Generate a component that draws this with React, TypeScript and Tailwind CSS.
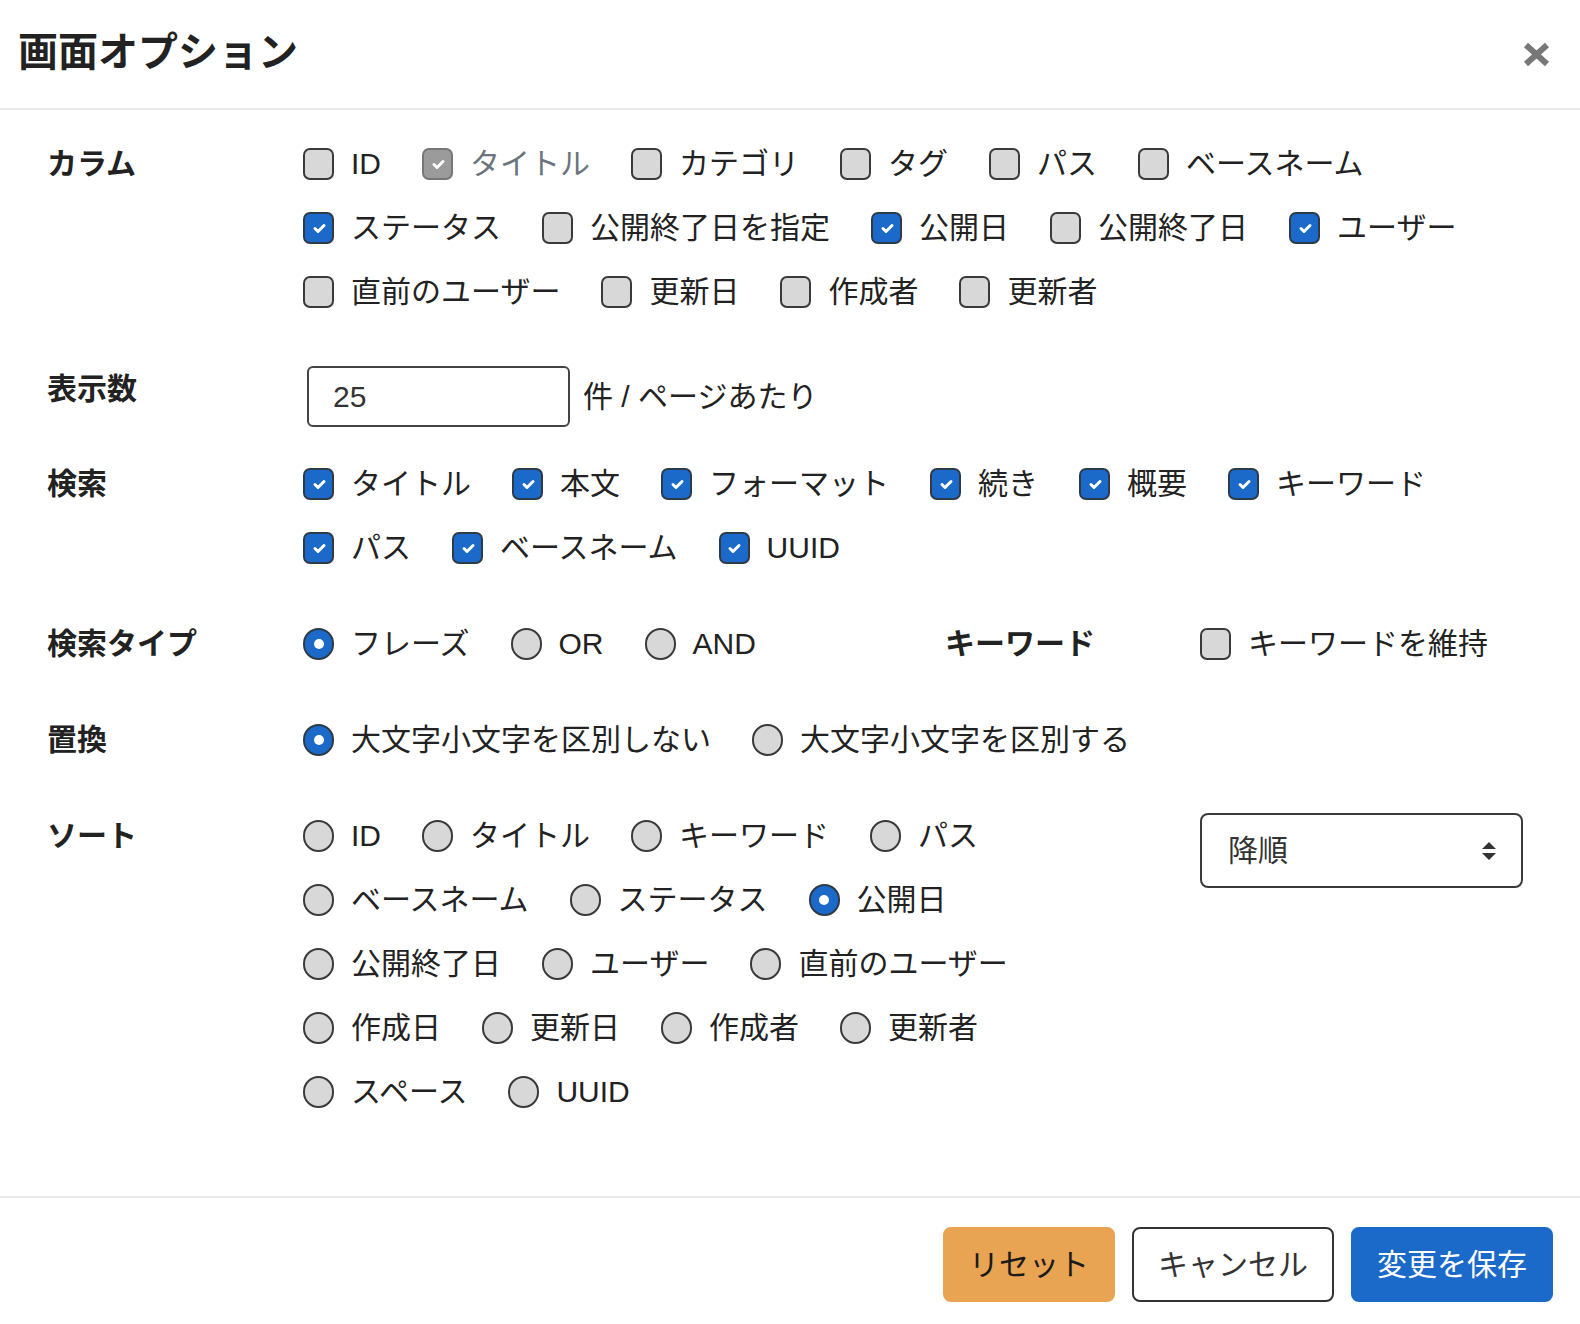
import type { ReactNode } from 'react';

type Opt = { label: string; checked?: boolean; disabled?: boolean };

const columns: Opt[] = [
  { label: 'ID' },
  { label: 'タイトル', checked: true, disabled: true },
  { label: 'カテゴリ' },
  { label: 'タグ' },
  { label: 'パス' },
  { label: 'ベースネーム' },
  { label: 'ステータス', checked: true },
  { label: '公開終了日を指定' },
  { label: '公開日', checked: true },
  { label: '公開終了日' },
  { label: 'ユーザー', checked: true },
  { label: '直前のユーザー' },
  { label: '更新日' },
  { label: '作成者' },
  { label: '更新者' },
];

const searchFields = ['タイトル', '本文', 'フォーマット', '続き', '概要', 'キーワード', 'パス', 'ベースネーム', 'UUID'];

const sortFields = [
  'ID', 'タイトル', 'キーワード', 'パス', 'ベースネーム', 'ステータス', '公開日',
  '公開終了日', 'ユーザー', '直前のユーザー', '作成日', '更新日', '作成者', '更新者', 'スペース', 'UUID',
];

function CheckMark() {
  return (
    <svg viewBox="0 0 20 20" className="w-[20px] h-[20px]" fill="none">
      <path d="M6 10.5l3 3l6-6" stroke="#fff" strokeWidth={3} strokeLinecap="round" strokeLinejoin="round" />
    </svg>
  );
}

function Checkbox({ label, checked, disabled }: Opt) {
  let box = 'border-[#3a3a3a] bg-[#d8d8d8]';
  if (checked) box = disabled ? 'border-[#767676] bg-[#9b9b9b]' : 'border-[#2f3a48] bg-[#1b6ac9]';
  return (
    <label className="flex items-center gap-[17px] h-[45px]">
      <span className={`w-[31px] h-[32px] rounded-[7px] border-2 flex items-center justify-center shrink-0 ${box}`}>
        {checked && <CheckMark />}
      </span>
      <span className={`text-[30px] leading-[45px] whitespace-nowrap ${disabled ? 'text-[#6c757d]' : 'text-[#222]'}`}>
        {label}
      </span>
    </label>
  );
}

function Radio({ label, checked }: { label: string; checked?: boolean }) {
  return (
    <label className="flex items-center gap-[17px] h-[45px]">
      <span
        className={`w-[31px] h-[32px] rounded-full border-2 flex items-center justify-center shrink-0 ${
          checked ? 'border-[#2f3a48] bg-[#1b6ac9]' : 'border-[#3a3a3a] bg-[#d8d8d8]'
        }`}
      >
        {checked && <span className="w-[10px] h-[10px] rounded-full bg-white" />}
      </span>
      <span className="text-[30px] leading-[45px] whitespace-nowrap text-[#222]">{label}</span>
    </label>
  );
}

function Group({ children, className = '' }: { children: ReactNode; className?: string }) {
  return <div className={`flex flex-wrap gap-x-[41px] gap-y-[19px] ${className}`}>{children}</div>;
}

function Label({ children }: { children: ReactNode }) {
  return <div className="text-[30px] leading-[45px] font-bold text-[#222] whitespace-nowrap">{children}</div>;
}

export default function App() {
  return (
    <div className="w-[1580px] h-[1324px] bg-white font-['Liberation_Sans','Noto_Sans_CJK_JP',sans-serif] text-[#222] flex flex-col">
      {/* header */}
      <div className="h-[110px] border-b-2 border-[#e8e8e8] flex items-center justify-between pl-[18px] pr-[30px] shrink-0">
        <h2 className="text-[40px] leading-[48px] font-bold text-[#222] -mt-[4px]">画面オプション</h2>
        <svg viewBox="0 0 27 25" className="w-[27px] h-[25px]">
          <path d="M3 3L24 22M24 3L3 22" stroke="#777" strokeWidth={6} />
        </svg>
      </div>

      {/* body */}
      <div className="flex-1 pl-[47px] pr-[28px] pt-[31px]">
        <div className="grid grid-cols-[256px_1fr]">
          <Label>カラム</Label>
          <Group className="pr-[30px]">
            {columns.map((c) => (
              <Checkbox key={c.label} {...c} />
            ))}
          </Group>
        </div>

        <div className="grid grid-cols-[256px_1fr] mt-[52px]">
          <Label>表示数</Label>
          <div className="flex items-center">
            <div className="ml-[4px] w-[263px] h-[61px] border-2 border-[#444] rounded-[6px] flex items-center px-[24px] text-[30px] text-[#333]">
              25
            </div>
            <span className="ml-[13px] text-[30px] text-[#222] whitespace-nowrap">件 / ページあたり</span>
          </div>
        </div>

        <div className="grid grid-cols-[256px_1fr] mt-[34px]">
          <Label>検索</Label>
          <Group className="pr-[30px]">
            {searchFields.map((f) => (
              <Checkbox key={f} label={f} checked />
            ))}
          </Group>
        </div>

        <div className="grid grid-cols-[256px_642px_255px_1fr] mt-[51px]">
          <Label>検索タイプ</Label>
          <Group className="pr-[30px] gap-x-[38px]">
            <Radio label="フレーズ" checked />
            <Radio label="OR" />
            <Radio label="AND" />
          </Group>
          <Label>キーワード</Label>
          <Checkbox label="キーワードを維持" />
        </div>

        <div className="grid grid-cols-[256px_1fr] mt-[51px]">
          <Label>置換</Label>
          <Group className="pr-[30px]">
            <Radio label="大文字小文字を区別しない" checked />
            <Radio label="大文字小文字を区別する" />
          </Group>
        </div>

        <div className="grid grid-cols-[256px_897px_1fr] mt-[51px]">
          <Label>ソート</Label>
          <Group className="pr-[30px]">
            {sortFields.map((f, i) => (
              <Radio key={f + i} label={f} checked={f === '公開日'} />
            ))}
          </Group>
          <div>
            <div className="w-[323px] h-[75px] border-2 border-[#3a3a3a] rounded-[8px] flex items-center justify-between pl-[26px] pr-[24px]">
              <span className="text-[30px] text-[#333]">降順</span>
              <svg viewBox="0 0 16 20" className="w-[16px] h-[20px]">
                <path d="M8 1L15 8H1Z M8 19L15 12H1Z" fill="#333" />
              </svg>
            </div>
          </div>
        </div>
      </div>

      {/* footer */}
      <div className="border-t-2 border-[#e8e8e8] flex justify-end gap-[17px] pt-[29px] pb-[22px] pr-[27px] shrink-0">
        <button className="h-[75px] px-[24px] rounded-[8px] border-2 border-[#e8a453] bg-[#e8a453] text-[30px] text-[#1a1a1a]">
          リセット
        </button>
        <button className="h-[75px] px-[24px] rounded-[8px] border-2 border-[#333] bg-white text-[30px] text-[#333]">
          キャンセル
        </button>
        <button className="h-[75px] px-[24px] rounded-[8px] border-2 border-[#1b6ac9] bg-[#1b6ac9] text-[30px] text-white">
          変更を保存
        </button>
      </div>
    </div>
  );
}
